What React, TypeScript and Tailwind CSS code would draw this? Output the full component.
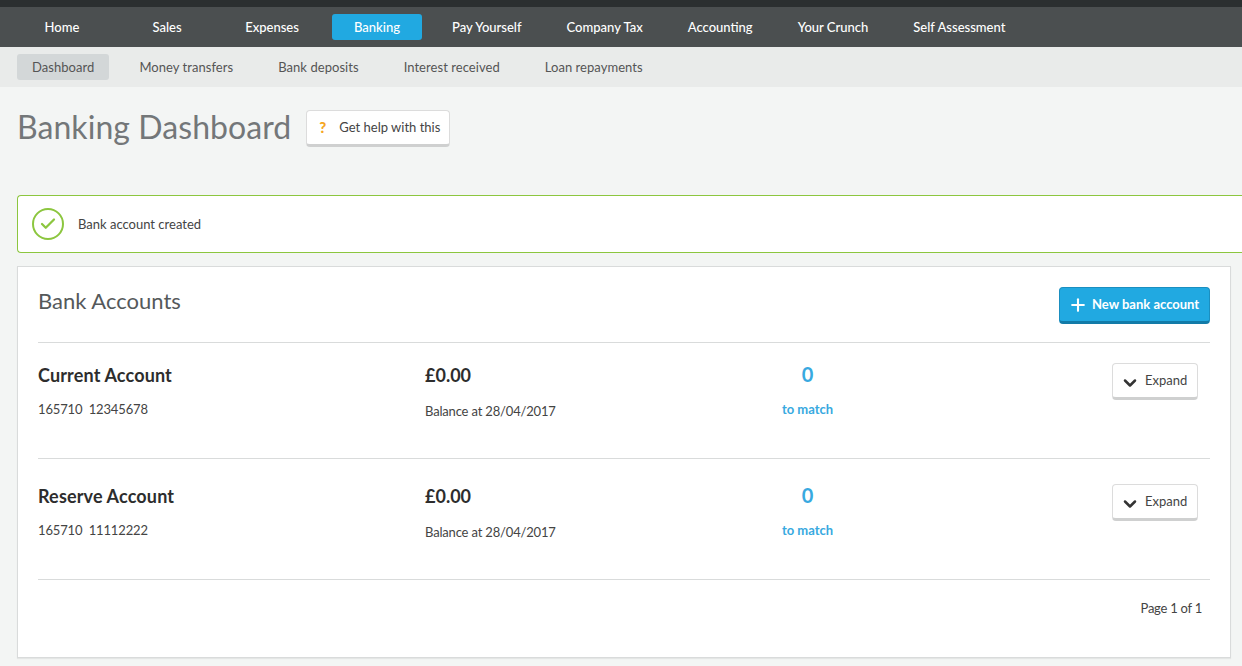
import { Check, ChevronDown, Plus } from "lucide-react";

const mainNav = [
  { label: "Home" },
  { label: "Sales" },
  { label: "Expenses" },
  { label: "Banking", active: true },
  { label: "Pay Yourself" },
  { label: "Company Tax" },
  { label: "Accounting" },
  { label: "Your Crunch" },
  { label: "Self Assessment" },
];

const subNav = [
  { label: "Dashboard", active: true },
  { label: "Money transfers" },
  { label: "Bank deposits" },
  { label: "Interest received" },
  { label: "Loan repayments" },
];

const accounts = [
  { name: "Current Account", number: "165710  12345678", row: "h-[116px]", inner: "" },
  { name: "Reserve Account", number: "165710  11112222", row: "h-[121px]", inner: "pt-[5px]" },
];

export default function App() {
  return (
    <div className="h-[666px] w-[1242px] overflow-hidden bg-[#f3f5f4] font-['Lato',sans-serif] text-[#333]">
      {/* Main nav */}
      <div className="h-[7px] bg-[#2b2f30]" />
      <nav className="flex h-10 items-start gap-[15px] bg-[#4b4f50] pl-[17px] pt-[7px]">
        {mainNav.map((item) => (
          <a
            key={item.label}
            className={`flex h-[26px] min-w-[90px] items-center justify-center rounded-[3px] px-[15px] pt-[2px] text-[13px] font-medium text-white ${
              item.active ? "bg-[#21a9e1]" : ""
            }`}
          >
            {item.label}
          </a>
        ))}
      </nav>

      {/* Sub nav */}
      <nav className="flex h-10 items-start gap-[15px] bg-[#e9ebea] pl-[17px] pt-[7px]">
        {subNav.map((item) => (
          <a
            key={item.label}
            className={`flex h-[26px] items-center rounded-[3px] px-[15px] pt-[2px] text-[13px] tracking-[0.05px] text-[#555] ${
              item.active ? "bg-[#d3d7d8] text-[#444]" : ""
            }`}
          >
            {item.label}
          </a>
        ))}
      </nav>

      {/* Heading */}
      <div className="flex h-[108px] items-start pl-[17px] pt-[23px]">
        <h1 className="-mt-px text-[32px] leading-[36px] font-normal tracking-[0.06px] text-[#737779]">Banking Dashboard</h1>
        <button className="ml-[15px] flex h-[37px] w-[144px] items-center rounded-[4px] border border-[#dcdcdc] border-b-[3px] border-b-[#cfd0d0] bg-white pl-3 text-left text-[13px] text-[#444]">
          <span className="w-5 text-[15px] font-black text-[#f5a623]">?</span>
          Get help with this
        </button>
      </div>

      {/* Success message */}
      <div className="ml-[17px] flex h-[58px] items-center rounded-l-[4px] border border-r-0 border-[#8cc63f] bg-white pl-3.5">
        <span className="flex h-8 w-8 items-center justify-center rounded-full border-2 border-[#8cc63f]">
          <Check className="h-[18px] w-[18px] text-[#8cc63f]" strokeWidth={3} />
        </span>
        <span className="ml-[14px] pt-[2px] text-[13px] text-[#444]">Bank account created</span>
      </div>

      {/* Accounts card */}
      <section className="ml-[17px] mt-[13px] h-[392px] w-[1214px] border border-[#d9dbdb] bg-white px-5 shadow-[0_1px_1px_rgba(0,0,0,0.06)]">
        <div className="flex h-[75px] items-start justify-between">
          <h2 className="pt-5 text-[22px] leading-[28px] font-normal text-[#55595b]">Bank Accounts</h2>
          <button className="mt-5 flex h-[37px] w-[151px] items-center rounded-[4px] border border-[#1b8fc0] border-b-[3px] border-b-[#127ba8] bg-[#21a9e1] pl-[8px] text-[13px] font-bold text-white">
            <Plus className="mr-1 h-5 w-5" strokeWidth={2.5} />
            New bank account
          </button>
        </div>

        {accounts.map((account) => (
          <div key={account.name} className={`border-t border-[#d9dbdb] ${account.row} ${account.inner}`}>
            <div className="flex">
              <div className="w-[387px] pt-[19px]">
                <div className="text-lg leading-[26px] font-bold tracking-[0.15px] text-[#2d2d2d]">{account.name}</div>
                <div className="mt-[12px] whitespace-pre text-[13px] leading-[18px] tracking-[-0.15px] text-[#444]">{account.number}</div>
              </div>
              <div className="w-[339px] pt-[19px]">
                <div className="text-lg leading-[26px] font-bold text-[#2d2d2d]">£0.00</div>
                <div className="mt-[14px] text-[13px] leading-[18px] tracking-[-0.17px] text-[#444]">Balance at 28/04/2017</div>
              </div>
              <div className="w-[87px] pt-[19px] text-center text-[#38a9e0]">
                <div className="text-xl leading-[25px] font-bold">0</div>
                <div className="mt-[13px] text-[13px] leading-[18px] font-bold">to match</div>
              </div>
              <div className="flex flex-1 justify-end pr-3 pt-5">
                <button className="flex h-[37px] w-[86px] items-center rounded-[4px] border border-[#dcdcdc] border-b-[3px] border-b-[#cfd0d0] bg-white pl-[7px] text-[13px] text-[#444]">
                  <ChevronDown className="mr-[5px] mt-1 h-5 w-5 text-[#333]" strokeWidth={3} />
                  Expand
                </button>
              </div>
            </div>
          </div>
        ))}

        <div className="border-t border-[#d9dbdb] pr-2 pt-[19px] text-right text-[13px] tracking-[-0.25px] text-[#444]">Page 1 of 1</div>
      </section>
    </div>
  );
}
